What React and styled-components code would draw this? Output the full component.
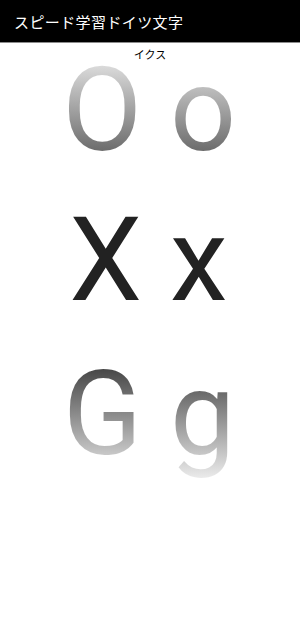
import React from "react";
import styled, { createGlobalStyle, css } from "styled-components";

const GlobalStyle = createGlobalStyle`
  html, body { margin: 0; padding: 0; background: #ffffff; }
  body { font-family: Roboto, "Noto Sans CJK JP", sans-serif; }
`;

const Screen = styled.div`
  width: 300px;
  min-height: 617px;
  background: #ffffff;
`;

const AppBar = styled.header`
  height: 42px;
  background: #000000;
  border-bottom: 1px solid #8c8c8c;
  display: flex;
  align-items: center;
  padding-left: 14px;
`;

const Title = styled.div`
  margin: 0;
  color: #ffffff;
  font-family: "Noto Sans CJK JP", sans-serif;
  font-weight: 400;
  font-size: 15px;
  letter-spacing: 0.4px;
  line-height: 1;
  white-space: nowrap;
`;

const Reading = styled.div`
  text-align: center;
  font-family: "Noto Sans CJK JP", sans-serif;
  font-size: 11px;
  line-height: 22px;
  color: #000000;
`;

const LetterRow = styled.div`
  display: grid;
  grid-template-columns: 142px 1fr;
  column-gap: 28px;
  margin-top: ${(p) => p.$gap}px;
  font-family: Roboto, sans-serif;
  font-size: 116px;
  line-height: 90px;
`;

const Cell = styled.div`
  text-align: ${(p) => p.$align};
`;

const tones = {
  fadeDown: css`
    background-image: linear-gradient(to bottom, #f9f9f9, #494949);
  `,
  fadeUp: css`
    background-image: linear-gradient(to bottom, #252525, #f1f1f1);
  `,
};

const Glyph = styled.span`
  ${(p) =>
    p.$tone === "solid"
      ? css`
          color: #222222;
        `
      : css`
          ${tones[p.$tone]}
          -webkit-background-clip: text;
          background-clip: text;
          color: transparent;
        `}
`;

const rows = [
  { upper: "O", lower: "o", tone: "fadeDown", gap: 0 },
  { upper: "X", lower: "x", tone: "solid", gap: 60 },
  { upper: "G", lower: "g", tone: "fadeUp", gap: 64 },
];

export default function App() {
  return (
    <Screen>
      <GlobalStyle />
      <AppBar>
        <Title>スピード学習ドイツ文字</Title>
      </AppBar>
      <Reading>イクス</Reading>
      {rows.map((r) => (
        <LetterRow key={r.upper} $gap={r.gap}>
          <Cell $align="right">
            <Glyph $tone={r.tone}>{r.upper}</Glyph>
          </Cell>
          <Cell $align="left">
            <Glyph $tone={r.tone}>{r.lower}</Glyph>
          </Cell>
        </LetterRow>
      ))}
    </Screen>
  );
}
